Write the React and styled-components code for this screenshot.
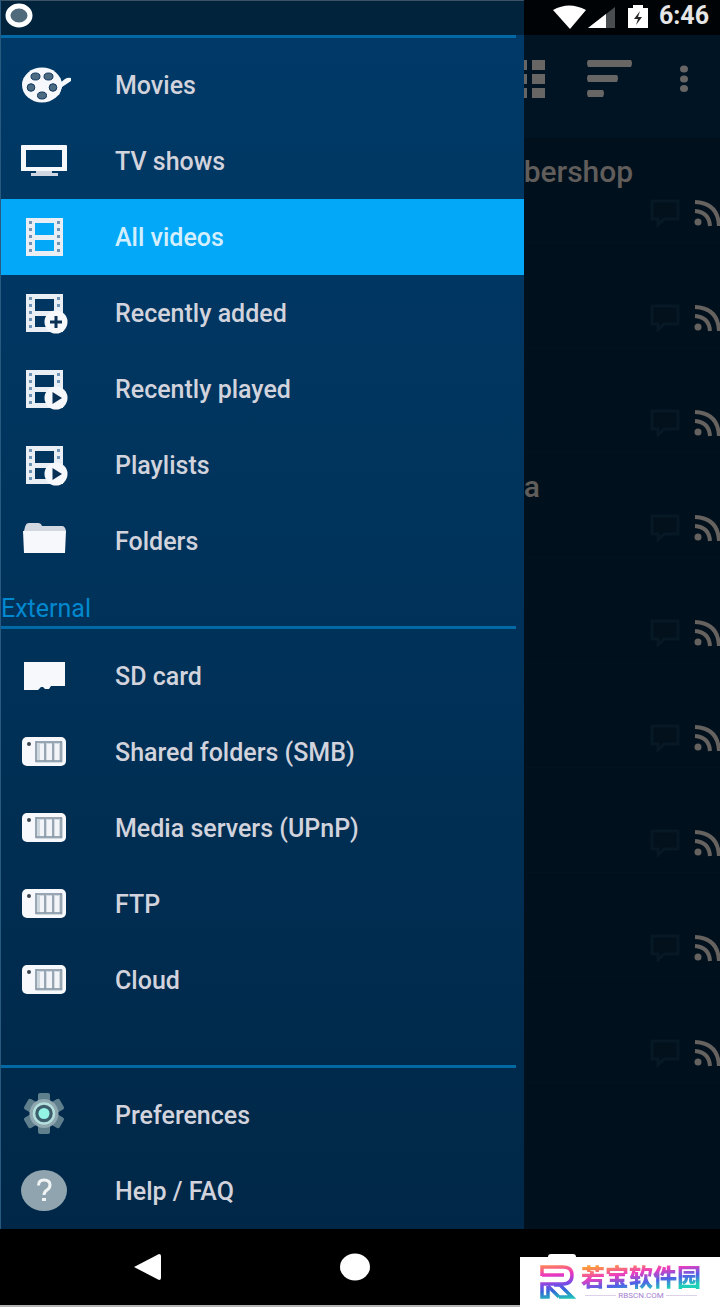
import React from "react";
import styled, { createGlobalStyle } from "styled-components";

const FilmBody = () => (
  <>
    <path
      fillRule="evenodd"
      d="M6 5h37v38H6zM15 10h19v12H15zM15 27h19v11H15z"
      fill="#e9edf4"
    />
    <path
      d="M9 8h3v3H9zM9 15h3v3H9zM9 22h3v3H9zM9 29h3v3H9zM9 36h3v3H9zM37 8h3v3h-3zM37 15h3v3h-3zM37 22h3v3h-3zM37 29h3v3h-3zM37 36h3v3h-3z"
      fill="#6f93b4"
    />
  </>
);

const ReelIcon = () => (
  <Icon viewBox="0 0 48 48">
    <ellipse cx="22" cy="24" rx="20" ry="17.500" />
    <path d="M36 34l-1-8 10-8q3-2 6-1v3l-9 6-3 8z" />
    <g fill="#4d6b80" stroke="#0d3560" strokeWidth="1">
      <ellipse cx="15.500" cy="15.500" rx="4.500" ry="3.500" />
      <ellipse cx="28.500" cy="15.500" rx="4.500" ry="3.500" />
      <ellipse cx="11" cy="26.500" rx="3.800" ry="3.800" />
      <ellipse cx="33" cy="26.500" rx="3.800" ry="3.800" />
      <ellipse cx="22" cy="34.500" rx="4.500" ry="3.500" />
    </g>
  </Icon>
);

const TvIcon = () => (
  <Icon viewBox="0 0 48 48">
    <path fillRule="evenodd" d="M2 8h44q1 0 1 1v25H1V9q0-1 1-1zM6 13h36v17H6z" />
    <path d="M16 34h16v2h6v3H11v-3h5z" fill="#cfd6e2" />
  </Icon>
);

const FilmIcon = () => (
  <Icon viewBox="0 0 48 48">
    <FilmBody />
  </Icon>
);

const AddedIcon = () => (
  <Icon viewBox="0 0 48 48">
    <FilmBody />
    <circle cx="36" cy="33" r="11.500" />
    <path d="M34.500 27h3v4.500H42v3h-4.500V39h-3v-4.500H30v-3h4.500z" fill="#0b3056" />
  </Icon>
);

const PlayedIcon = () => (
  <Icon viewBox="0 0 48 48">
    <FilmBody />
    <circle cx="36" cy="33" r="11.500" />
    <path d="M32.500 27l9.500 6-9.500 6z" fill="#0b3056" />
  </Icon>
);

const FolderIcon = () => (
  <Icon viewBox="0 0 48 48">
    <path d="M5 10q1-4 4-4h9q3 0 4 3h20q3 0 4 5H4z" fill="#d3d8e0" />
    <path d="M3 14h43l-1 22H4z" />
  </Icon>
);

const CardIcon = () => (
  <Icon viewBox="0 0 48 48">
    <path d="M4 10h41v24H31l-2 3h-4l-2-2h-2l-3 3H4z" />
  </Icon>
);

const ServerIcon = () => (
  <Icon viewBox="0 0 48 48">
    <rect x="2" y="9" width="44" height="29" rx="5" />
    <rect x="15" y="13" width="28" height="22" rx="2" fill="#cfd7df" />
    <path d="M20 16h4v16h-4zM27 16h5v16h-5zM35 16h4v16h-4z" fill="#f3f4f8" />
    <path
      d="M16 14h26M16 33h26M16 13v21M25 15v18M33 15v18M41 13v21"
      fill="none"
      stroke="#8696a6"
      strokeWidth="1.500"
    />
    <circle cx="9" cy="16" r="2" fill="#3a444f" />
  </Icon>
);

const GearIcon = () => (
  <Icon viewBox="0 0 48 48">
    <g fill="#607f8d">
      <rect x="18" y="2" width="12" height="41" rx="2" />
      <rect x="18" y="2" width="12" height="41" rx="2" transform="rotate(60 24 22.500)" />
      <rect x="18" y="2" width="12" height="41" rx="2" transform="rotate(120 24 22.500)" />
    </g>
    <circle cx="24" cy="22.500" r="14.500" fill="#8fa7af" />
    <circle cx="24" cy="22.500" r="10" fill="#3d5e6c" stroke="#b4dfdd" strokeWidth="2.500" />
    <circle cx="24" cy="22.500" r="5.500" fill="#93f4e6" />
  </Icon>
);

const HelpIcon = () => (
  <Icon viewBox="0 0 48 48">
    <ellipse cx="24" cy="23.500" rx="23" ry="20.500" fill="#8fa4ae" />
    <path
      d="M18.500 18.500q0-5.500 5.500-5.500 6 0 6 5 0 3-3 5-3 2-3 5"
      fill="none"
      stroke="#f1f4f5"
      strokeWidth="3"
    />
    <rect x="22" y="31" width="4" height="3" fill="#f1f4f5" />
  </Icon>
);

const library = [
  { label: "Movies", icon: ReelIcon },
  { label: "TV shows", icon: TvIcon },
  { label: "All videos", icon: FilmIcon, active: true },
  { label: "Recently added", icon: AddedIcon },
  { label: "Recently played", icon: PlayedIcon },
  { label: "Playlists", icon: PlayedIcon },
  { label: "Folders", icon: FolderIcon },
];

const external = [
  { label: "SD card", icon: CardIcon },
  { label: "Shared folders (SMB)", icon: ServerIcon },
  { label: "Media servers (UPnP)", icon: ServerIcon },
  { label: "FTP", icon: ServerIcon },
  { label: "Cloud", icon: ServerIcon },
];

const misc = [
  { label: "Preferences", icon: GearIcon },
  { label: "Help / FAQ", icon: HelpIcon },
];

const videos = ["bershop", "", "", "a", "", "", "", "", ""];

const Menu = ({ items }) => (
  <MenuList>
    {items.map(({ label, icon: ItemIcon, active }) => (
      <li key={label}>
        <MenuLink href="#" $active={active}>
          <ItemIcon />
          {label}
        </MenuLink>
      </li>
    ))}
  </MenuList>
);

const StatusIcons = () => (
  <StatusSvg viewBox="0 0 96 28" width="96" height="28">
    <path d="M0 6Q16-3 33 6L17 25z" />
    <path d="M62 3v21H35z" fill="#4a4d50" />
    <path d="M53 10v14H35z" />
    <path d="M75 4h5V1h10v3h5v20H75z" />
    <path d="M87 7l-6 8h4l-2 6 6-8h-4z" fill="#222" />
  </StatusSvg>
);

const VideoRow = ({ title }) => (
  <Video>
    <VideoTitle>{title}</VideoTitle>
    <VideoMeta>
      <svg width="30" height="28" viewBox="0 0 30 28">
        <path
          d="M2 2h26v18H14l-6 6v-6H2z"
          fill="#02111c"
          stroke="#071924"
          strokeWidth="3"
        />
      </svg>
      <svg width="26" height="28" viewBox="0 0 26 28">
        <g fill="none" stroke="#66625f" strokeWidth="4">
          <path d="M1 3q23 1 24 24" />
          <path d="M1 12q14 1 15 15" />
        </g>
        <circle cx="4" cy="23" r="3.500" fill="#66625f" />
      </svg>
    </VideoMeta>
  </Video>
);

const Watermark = () => (
  <Brand>
    <svg width="37" height="36" viewBox="0 0 37 36">
      <defs>
        <linearGradient id="mark" gradientUnits="userSpaceOnUse" x1="10" y1="0" x2="14" y2="36">
          <stop offset="0" stopColor="#ff8a50" />
          <stop offset="0.300" stopColor="#ee35bd" />
          <stop offset="0.580" stopColor="#7a4be6" />
          <stop offset="0.750" stopColor="#3467d8" />
          <stop offset="1" stopColor="#20c4b8" />
        </linearGradient>
      </defs>
      <g fill="none" stroke="url(#mark)" strokeWidth="3.500">
        <path d="M2 12V3h21q9 0 9 8 0 9-9 9H2v13h6V22" />
        <path d="M2 11h22" />
        <path d="M8 22l11 11M14 21h6l12 12H19" />
      </g>
    </svg>
    <BrandText>
      <BrandName>若宝软件园</BrandName>
      <BrandSite>RBSCN.COM</BrandSite>
    </BrandText>
  </Brand>
);

export default function App() {
  return (
    <Page>
      <GlobalStyle />
      <Screen>
        <Drawer>
          <DrawerStatus>
            <svg width="30" height="30" viewBox="0 0 30 30">
              <ellipse cx="15" cy="14.500" rx="11" ry="9.500" fill="#4f6b7b" stroke="#fff" strokeWidth="5" />
            </svg>
          </DrawerStatus>
          <Divider />
          <Menu items={library} />
          <SectionTitle>External</SectionTitle>
          <Divider />
          <Menu items={external} />
          <Spacer />
          <Divider />
          <Menu items={misc} />
        </Drawer>
        <Content>
          <StatusBar>
            <StatusIcons />
            <Clock>6:46</Clock>
          </StatusBar>
          <Toolbar>
            <ToolButton aria-label="Grid">
              <svg width="22" height="38" viewBox="0 0 22 38">
                <path d="M0 0h3v10H0zM8 0h13v10H8zM0 14h3v10H0zM8 14h13v10H8zM0 28h3v10H0zM8 28h13v10H8z" />
              </svg>
            </ToolButton>
            <ToolButton aria-label="Sort">
              <svg width="50" height="38" viewBox="0 0 50 38">
                <path d="M1 0h43q2 3 0 7H1q-2-4 0-7zM1 15h29q2 3 0 7H1q-2-4 0-7zM1 30h15q2 3 0 7H1q-2-4 0-7z" />
              </svg>
            </ToolButton>
            <ToolButton aria-label="More">
              <svg width="10" height="38" viewBox="0 0 10 38">
                <ellipse cx="5" cy="9" rx="4" ry="3.500" />
                <ellipse cx="5" cy="19" rx="4" ry="3.500" />
                <ellipse cx="5" cy="28.500" rx="4" ry="3.500" />
              </svg>
            </ToolButton>
          </Toolbar>
          {videos.map((title, i) => (
            <VideoRow key={i} title={title} />
          ))}
        </Content>
      </Screen>
      <NavBar>
        <NavButton aria-label="Back">
          <svg width="30" height="30" viewBox="0 0 30 30">
            <path d="M1 15L26 2q2 0 2 2v22q0 2-2 2z" />
          </svg>
        </NavButton>
        <NavButton aria-label="Home">
          <svg width="30" height="30" viewBox="0 0 30 30">
            <ellipse cx="15" cy="15" rx="15" ry="13.500" />
          </svg>
        </NavButton>
        <NavButton aria-label="Recent apps">
          <svg width="30" height="30" viewBox="0 0 30 30">
            <rect x="1" y="2" width="28" height="26" rx="3" />
          </svg>
        </NavButton>
      </NavBar>
      <Watermark />
    </Page>
  );
}

const GlobalStyle = createGlobalStyle`
  * {
    box-sizing: border-box;
  }
  body {
    margin: 0;
    background: #b4b4b4;
    font-family: Roboto, "Noto Sans", sans-serif;
  }
`;

const Page = styled.div`
  position: relative;
  padding-bottom: 2px;
  overflow: hidden;
`;

const Screen = styled.div`
  display: grid;
  grid-template-columns: 8fr 3fr;
`;

const Drawer = styled.nav`
  background: linear-gradient(#003a68, #00345d 40%, #002747);
  border-left: 1px solid #285a80;
`;

const DrawerStatus = styled.div`
  height: 35px;
  padding-left: 3px;
  background: #02233c;
  border-top: 1px solid #3b5365;
`;

const Divider = styled.hr`
  height: 3px;
  margin: 0 8px 0 0;
  border: none;
  background: #0369a4;
`;

const Spacer = styled.div`
  height: 47px;
`;

const MenuList = styled.ul`
  margin: 0;
  padding: 9px 0 0;
  list-style: none;
`;

const MenuLink = styled.a`
  display: flex;
  align-items: center;
  gap: 47px;
  height: 76px;
  padding-left: 19px;
  font-size: 25px;
  font-weight: 500;
  color: ${(props) => (props.$active ? "#d3efff" : "#d2d3dc")};
  background: ${(props) => (props.$active ? "#03a9f8" : "transparent")};
  text-decoration: none;
`;

const Icon = styled.svg`
  flex: none;
  width: 48px;
  height: 48px;
  overflow: visible;
  fill: #f7f8fb;
`;

const SectionTitle = styled.h2`
  height: 47px;
  margin: 0;
  padding-top: 14px;
  font-size: 25px;
  font-weight: 400;
  line-height: 32px;
  color: #0288cf;
`;

const Content = styled.main`
  min-width: 0;
  overflow: hidden;
  background: #00101c;
`;

const StatusBar = styled.div`
  display: flex;
  align-items: center;
  justify-content: flex-end;
  gap: 10px;
  height: 35px;
  padding-right: 11px;
  background: #000306;
`;

const StatusSvg = styled.svg`
  fill: #fff;
`;

const Clock = styled.span`
  font-size: 25px;
  font-weight: 700;
  line-height: 32px;
  padding-bottom: 3px;
  color: #e6e6e6;
`;

const Toolbar = styled.div`
  display: flex;
  justify-content: space-between;
  height: 103px;
  padding: 25px 31px 0 0;
  background: #001424;
`;

const ToolButton = styled.button`
  display: flex;
  align-self: flex-start;
  padding: 0;
  border: none;
  background: none;
  fill: #686665;
`;

const Video = styled.article`
  display: flex;
  flex-direction: column;
  justify-content: space-between;
  height: 105px;
  padding: 16px 0 15px;
  border-bottom: 1px solid #02131f;
`;

const VideoTitle = styled.h3`
  height: 36px;
  margin: 0;
  font-size: 30px;
  font-weight: 500;
  line-height: 36px;
  color: #605d5b;
`;

const VideoMeta = styled.div`
  display: flex;
  justify-content: flex-end;
  gap: 14px;
`;

const NavBar = styled.footer`
  display: grid;
  grid-template-columns: repeat(3, 1fr);
  height: 76px;
  padding: 0 54px 0 44px;
  background: #000;
`;

const NavButton = styled.button`
  display: flex;
  align-items: center;
  justify-content: center;
  padding: 0;
  border: none;
  background: none;
  fill: #fff;
`;

const Brand = styled.div`
  position: absolute;
  right: 0;
  bottom: 0;
  display: flex;
  align-items: center;
  gap: 4px;
  width: 200px;
  height: 50px;
  padding-left: 20px;
  background: #fff;
`;

const BrandText = styled.div`
  display: flex;
  flex-direction: column;
`;

const BrandName = styled.strong`
  font-family: "Noto Sans CJK SC", sans-serif;
  font-size: 24px;
  font-weight: 900;
  line-height: 36px;
  margin: -6px 0 -3px;
  color: transparent;
  background: linear-gradient(172deg, #ff9a3c 20%, #ee3cc0 42%, #4f62e6 62%, #1ed0b8 80%);
  background-clip: text;
`;

const BrandSite = styled.span`
  display: flex;
  align-items: center;
  gap: 2px;
  padding: 0 4px;
  font-size: 8px;
  line-height: 10px;
  color: #a67fd0;

  &::before,
  &::after {
    content: "";
    flex: 1;
    height: 1px;
    background: #dcd3ea;
  }
`;
